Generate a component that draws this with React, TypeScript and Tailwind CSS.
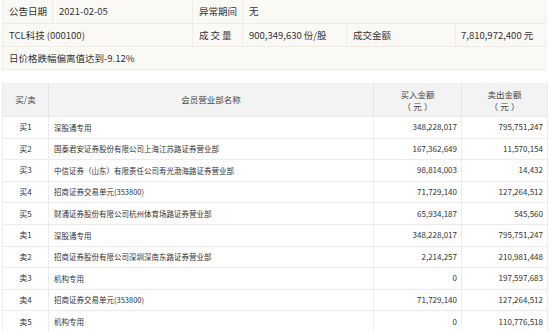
import React from 'react';

const rows = [
  { side: '买1', name: '深股通专用', buy: '348,228,017', sell: '795,751,247' },
  { side: '买2', name: '国泰君安证券股份有限公司上海江苏路证券营业部', buy: '167,362,649', sell: '11,570,154' },
  { side: '买3', name: '中信证券（山东）有限责任公司寿光渤海路证券营业部', buy: '98,814,003', sell: '14,432' },
  { side: '买4', name: '招商证券交易单元(353800)', buy: '71,729,140', sell: '127,264,512' },
  { side: '买5', name: '财通证券股份有限公司杭州体育场路证券营业部', buy: '65,934,187', sell: '545,560' },
  { side: '卖1', name: '深股通专用', buy: '348,228,017', sell: '795,751,247' },
  { side: '卖2', name: '招商证券股份有限公司深圳深南东路证券营业部', buy: '2,214,257', sell: '210,981,448' },
  { side: '卖3', name: '机构专用', buy: '0', sell: '197,597,683' },
  { side: '卖4', name: '招商证券交易单元(353800)', buy: '71,729,140', sell: '127,264,512' },
  { side: '卖5', name: '机构专用', buy: '0', sell: '110,776,518' },
];

const font = { fontFamily: '"Noto Sans CJK SC", "Liberation Sans", sans-serif' };

function Unit() {
  return (
    <span className="flex w-[30px] justify-between">
      <span>（</span>
      <span>元</span>
      <span>）</span>
    </span>
  );
}

export default function App() {
  return (
    <div className="w-[550px] h-[331px] overflow-hidden bg-white text-[#333]" style={font}>
      {/* summary block */}
      <div className="ml-[2px] w-[544px] bg-[#fbf9f5] text-[9.5px] border border-t-0 border-[#f0ede7]">
        <div className="flex h-[24px] items-center border-b border-[#efece6]">
          <div className="w-[50px] h-full flex items-center pl-[6px] border-r border-[#efece6]">公告日期</div>
          <div className="w-[140px] h-full flex items-center pl-[6px] border-r border-[#efece6]">2021-02-05</div>
          <div className="w-[50px] h-full flex items-center pl-[6px] border-r border-[#efece6]">异常期间</div>
          <div className="flex-1 h-full flex items-center pl-[6px]">无</div>
        </div>
        <div className="flex h-[23px] items-center border-b border-[#efece6]">
          <div className="w-[190px] h-full flex items-center pl-[6px] border-r border-[#efece6]">TCL科技 (000100)</div>
          <div className="w-[50px] h-full flex items-center pl-[6px] border-r border-[#efece6] tracking-[2px]">成交量</div>
          <div className="w-[104px] h-full flex items-center pl-[6px] border-r border-[#efece6]">900,349,630 份/股</div>
          <div className="w-[109px] h-full flex items-center pl-[6px] border-r border-[#efece6]">成交金额</div>
          <div className="flex-1 h-full flex items-center pl-[5px]">7,810,972,400 元</div>
        </div>
        <div className="flex h-[22px] items-center pl-[6px]">日价格跌幅偏离值达到-9.12%</div>
      </div>

      {/* seat table */}
      <div className="ml-[2px] mt-[13px] w-[546px] border-l border-r border-[#ececec]">
        <div className="flex h-[33px] bg-[#f3f3f3] text-[8.5px] text-[#444]">
          <div className="w-[46px] flex items-center justify-center border-r border-[#e4e4e4]">买/卖</div>
          <div className="w-[325px] flex items-center justify-center border-r border-[#e4e4e4]">会员营业部名称</div>
          <div className="w-[88px] flex flex-col items-center justify-center leading-[12px] border-r border-[#e4e4e4]">
            <span>买入金额</span>
            <Unit />
          </div>
          <div className="flex-1 flex flex-col items-center justify-center leading-[12px]">
            <span>卖出金额</span>
            <Unit />
          </div>
        </div>
        {rows.map((r) => (
          <div key={r.side} className="flex h-[21.6px] border-t border-[#ececec] items-stretch">
            <div className="w-[46px] flex items-center justify-center text-[8px] border-r border-[#ececec]">{r.side}</div>
            <div className="w-[325px] flex items-center pl-[5px] text-[7.5px] border-r border-[#ececec]">{r.name}</div>
            <div className="w-[88px] flex items-center justify-end pr-[4px] text-[8px] border-r border-[#ececec]">{r.buy}</div>
            <div className="flex-1 flex items-center justify-end pr-[4px] text-[8px]">{r.sell}</div>
          </div>
        ))}
      </div>
    </div>
  );
}
